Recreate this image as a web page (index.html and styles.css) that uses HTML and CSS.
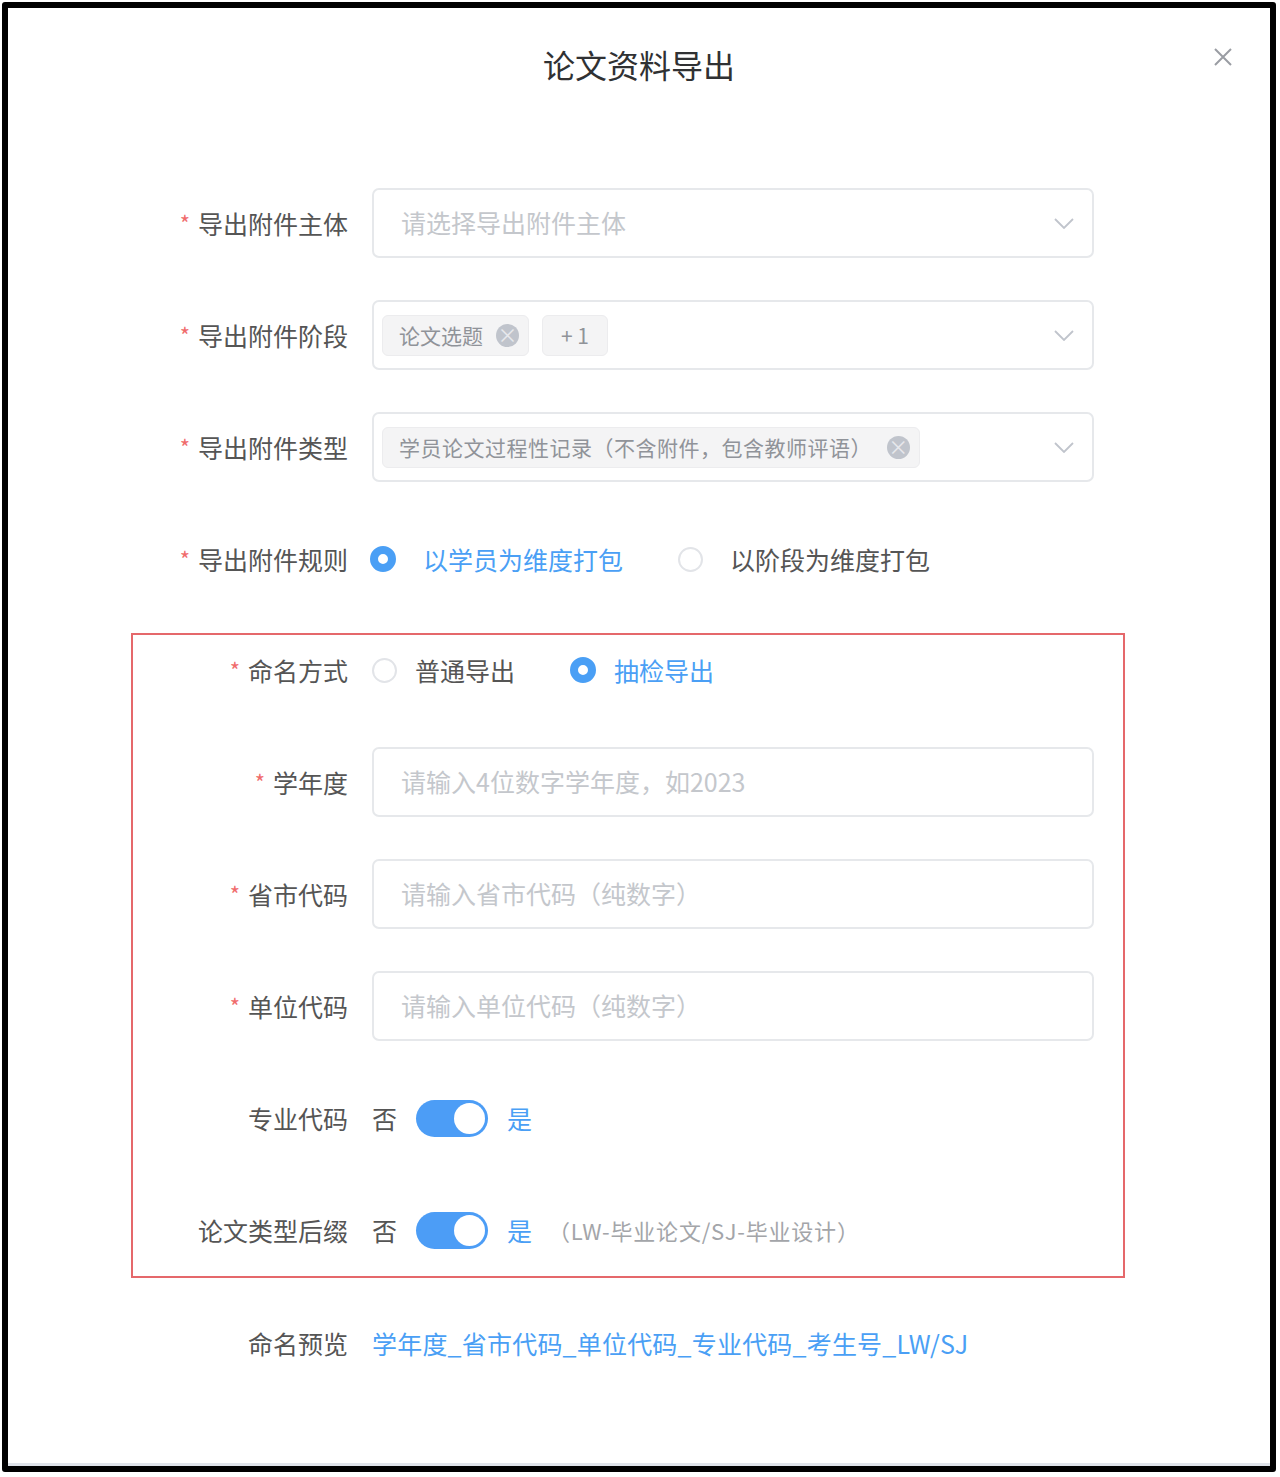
FILE: index.html
```html
<!DOCTYPE html>
<html lang="zh-CN">
<head>
  <meta charset="UTF-8" />
  <meta name="viewport" content="width=device-width, initial-scale=1.0" />
  <title>论文资料导出</title>
  <link rel="stylesheet" href="styles.css">
</head>
<body>

  <div class="frame">
    <header class="dialog-header">
      <h2 class="dialog-title">论文资料导出</h2>
      <button class="close-btn" aria-label="关闭">
        <svg width="20" height="20" viewBox="0 0 20 20"><path d="M2 2 L18 18 M18 2 L2 18" stroke="#9a9da3" stroke-width="2" fill="none"/></svg>
      </button>
    </header>

    <form class="form">
      <div class="form-item">
        <label class="form-label"><span class="req">*</span>导出附件主体</label>
        <div class="form-control">
          <div class="select">
            <span class="select-placeholder">请选择导出附件主体</span>
            <svg class="chevron" width="20" height="11" viewBox="0 0 20 11"><polyline points="1,1 10,10 19,1" stroke="#c0c4cc" stroke-width="1.8" fill="none"/></svg>
          </div>
        </div>
      </div>

      <div class="form-item">
        <label class="form-label"><span class="req">*</span>导出附件阶段</label>
        <div class="form-control">
          <div class="select select-tags">
            <span class="tag">论文选题<i class="tag-close"></i></span>
            <span class="tag tag-count">+ 1</span>
            <svg class="chevron" width="20" height="11" viewBox="0 0 20 11"><polyline points="1,1 10,10 19,1" stroke="#c0c4cc" stroke-width="1.8" fill="none"/></svg>
          </div>
        </div>
      </div>

      <div class="form-item">
        <label class="form-label"><span class="req">*</span>导出附件类型</label>
        <div class="form-control">
          <div class="select select-tags">
            <span class="tag tag-long">学员论文过程性记录（不含附件，包含教师评语）<i class="tag-close"></i></span>
            <svg class="chevron" width="20" height="11" viewBox="0 0 20 11"><polyline points="1,1 10,10 19,1" stroke="#c0c4cc" stroke-width="1.8" fill="none"/></svg>
          </div>
        </div>
      </div>

      <div class="form-item">
        <label class="form-label"><span class="req">*</span>导出附件规则</label>
        <div class="form-control radio-group wide">
          <label class="radio checked"><span class="radio-dot"></span>以学员为维度打包</label>
          <label class="radio"><span class="radio-dot"></span>以阶段为维度打包</label>
        </div>
      </div>

      <div class="naming-box">
        <div class="form-item">
          <label class="form-label"><span class="req">*</span>命名方式</label>
          <div class="form-control radio-group">
            <label class="radio"><span class="radio-dot"></span>普通导出</label>
            <label class="radio checked"><span class="radio-dot"></span>抽检导出</label>
          </div>
        </div>

        <div class="form-item">
          <label class="form-label"><span class="req">*</span>学年度</label>
          <div class="form-control">
            <input class="input" type="text" placeholder="请输入4位数字学年度，如2023">
          </div>
        </div>

        <div class="form-item">
          <label class="form-label"><span class="req">*</span>省市代码</label>
          <div class="form-control">
            <input class="input" type="text" placeholder="请输入省市代码（纯数字）">
          </div>
        </div>

        <div class="form-item">
          <label class="form-label"><span class="req">*</span>单位代码</label>
          <div class="form-control">
            <input class="input" type="text" placeholder="请输入单位代码（纯数字）">
          </div>
        </div>

        <div class="form-item">
          <label class="form-label">专业代码</label>
          <div class="form-control">
            <span class="switch-text">否</span>
            <span class="switch on"><span class="switch-knob"></span></span>
            <span class="switch-text active">是</span>
          </div>
        </div>

        <div class="form-item">
          <label class="form-label">论文类型后缀</label>
          <div class="form-control">
            <span class="switch-text">否</span>
            <span class="switch on"><span class="switch-knob"></span></span>
            <span class="switch-text active">是</span>
            <span class="hint">（LW-毕业论文/SJ-毕业设计）</span>
          </div>
        </div>
      </div>

      <div class="form-item">
        <label class="form-label">命名预览</label>
        <div class="form-control">
          <span class="preview">学年度_省市代码_单位代码_专业代码_考生号_LW/SJ</span>
        </div>
      </div>
    </form>
  </div>

</body>
</html>
```

FILE: styles.css
```css
/* Reset */
* {
  box-sizing: border-box;
  margin: 0;
  padding: 0;
}

body {
  font-family: "Noto Sans CJK SC", "Noto Sans", sans-serif;
  background: #fff;
  color: #555;
}

/* Outer frame */
.frame {
  margin: 2px;
  width: 1274px;
  height: 1470px;
  border: 6px solid #000;
  border-radius: 3px;
  background: #fff;
  box-shadow: inset 0 -3px 0 #dfe3ea;
}

/* Header */
.dialog-header {
  position: relative;
  padding-top: 36px;
  text-align: center;
}

.dialog-title {
  font-size: 32px;
  line-height: 40px;
  font-weight: 400;
  color: #303133;
}

.close-btn {
  position: absolute;
  top: 39px;
  right: 37px;
  width: 20px;
  height: 20px;
  background: none;
  border: none;
  cursor: pointer;
  display: flex;
}

/* Form */
.form {
  margin: 104px 0 0 125px;
  width: 961px;
}

.form-item {
  display: flex;
  align-items: center;
  height: 70px;
  margin-bottom: 42px;
}

.form-label {
  width: 239px;
  flex-shrink: 0;
  padding-right: 24px;
  text-align: right;
  font-size: 25px;
  line-height: 68px;
  color: #555;
}

.req {
  color: #f06c6c;
  font-size: 22px;
  margin-right: 8px;
  position: relative;
  top: -2px;
}

.form-control {
  flex: 1;
  display: flex;
  align-items: center;
  height: 70px;
}

/* Select */
.select {
  width: 100%;
  height: 70px;
  border: 2px solid #e6e8eb;
  border-radius: 7px;
  display: flex;
  align-items: center;
  padding: 0 18px 0 27px;
}

.select-tags {
  padding-left: 8px;
  gap: 13px;
}

.select-placeholder {
  font-size: 25px;
  color: #c4c7cc;
  margin-top: -2px;
}

.chevron {
  margin-left: auto;
}

.tag {
  display: inline-flex;
  align-items: center;
  height: 41px;
  padding: 0 9px 0 16px;
  background: #f4f4f5;
  border: 1px solid #ececee;
  border-radius: 6px;
  font-size: 21px;
  color: #909399;
}

.tag-count {
  padding: 0 18px;
}

.tag-long {
  letter-spacing: 0.5px;
}

.tag-close {
  width: 23px;
  height: 23px;
  margin-left: 13px;
  border-radius: 50%;
  background: #c0c4cc;
  display: inline-flex;
  align-items: center;
  justify-content: center;
}

.tag-long .tag-close {
  margin-left: 15px;
}

.tag-close::before {
  content: "×";
  color: #e8e9ec;
  font-size: 20px;
  line-height: 1;
  font-style: normal;
}

/* Input */
.input {
  width: 100%;
  height: 70px;
  border: 2px solid #e6e8eb;
  border-radius: 7px;
  padding: 0 27px 3px;
  font-family: inherit;
  font-size: 25px;
  color: #555;
  outline: none;
}

.input::placeholder {
  color: #c4c7cc;
}

/* Radios */
.radio {
  display: flex;
  align-items: center;
  margin-right: 55px;
  font-size: 25px;
  color: #555;
}

.radio-dot {
  width: 25px;
  height: 25px;
  border: 2px solid #e2e4e8;
  border-radius: 50%;
  background: #fff;
  margin-right: 18px;
}

.radio.checked {
  color: #4a9ff5;
}

.radio.checked .radio-dot {
  width: 26px;
  height: 26px;
  border: 8px solid #4a9ff5;
}

.radio-group.wide .radio-dot {
  margin-right: 27px;
}

.radio-group.wide .radio:first-child {
  margin-left: -2px;
}

/* Naming box */
.naming-box {
  border: 2px solid #e5686b;
  margin: -3px -31px 30px -2px;
  padding-right: 29px;
}

.naming-box .form-item:last-child {
  margin-bottom: 11px;
}

/* Switch */
.switch-text {
  font-size: 25px;
  color: #555;
}

.switch-text.active {
  color: #4a9ff5;
}

.switch {
  width: 72px;
  height: 37px;
  margin: 0 19px;
  border-radius: 19px;
  background: #dcdfe6;
  display: flex;
  align-items: center;
  padding: 0 3px;
}

.switch.on {
  background: #4c9df6;
  justify-content: flex-end;
}

.switch-knob {
  width: 31px;
  height: 31px;
  border-radius: 50%;
  background: #fff;
}

.hint {
  margin-left: 16px;
  font-size: 22px;
  letter-spacing: 0.8px;
  color: #a3a5a9;
}

.preview {
  font-size: 25px;
  letter-spacing: 0.2px;
  color: #4a9ff5;
}
```
